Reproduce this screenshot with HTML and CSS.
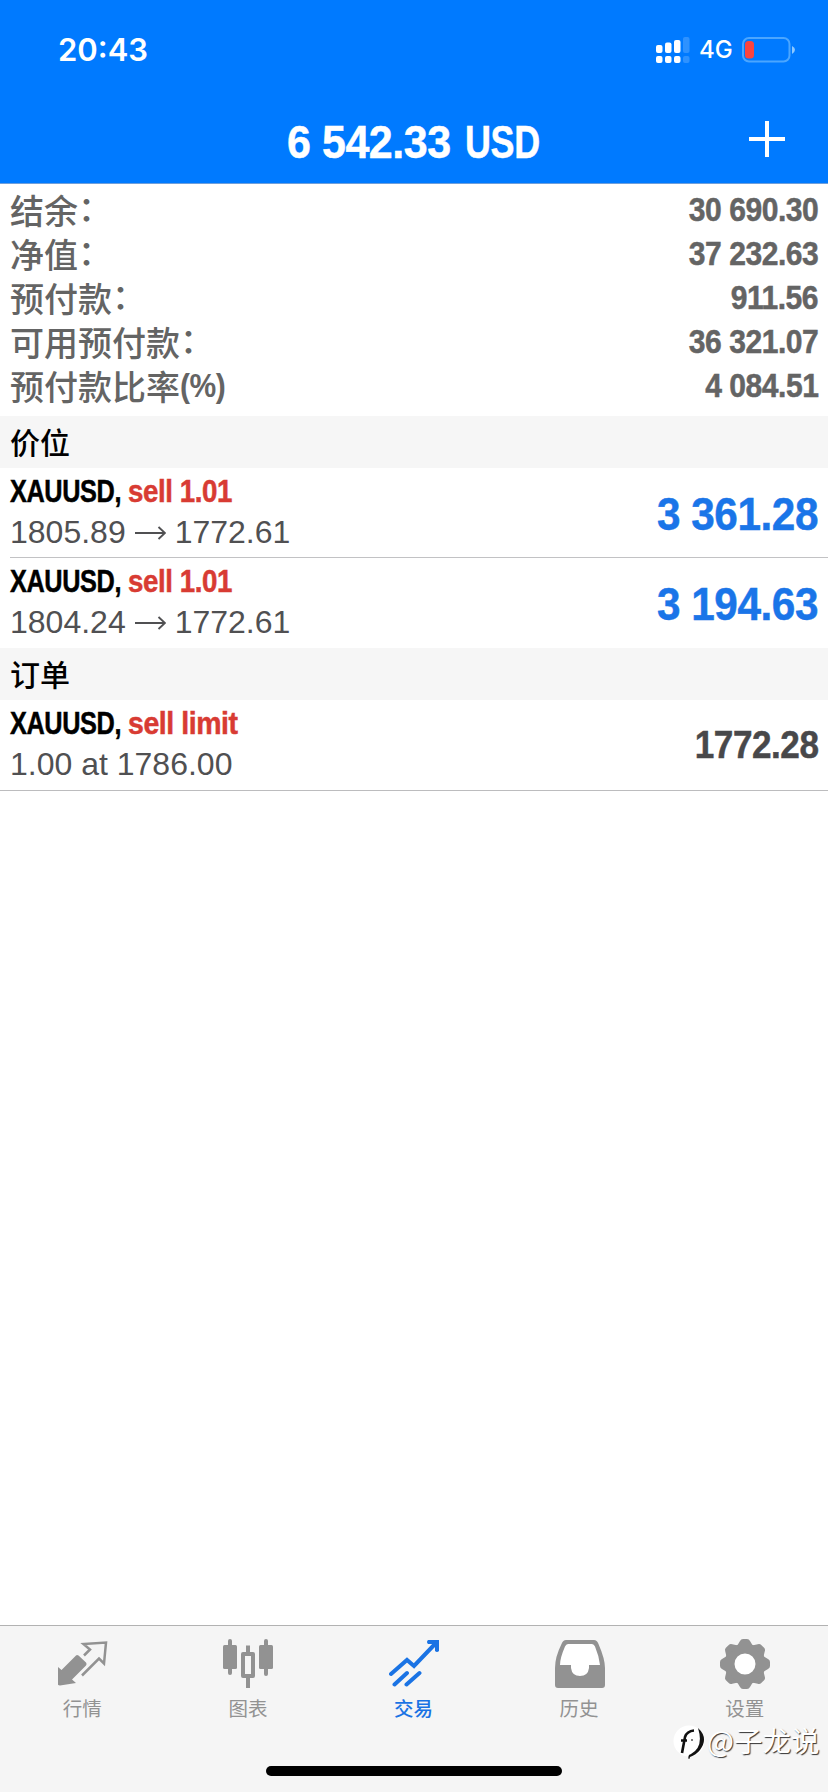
FILE: index.html
```html
<!DOCTYPE html>
<html lang="zh-CN">
<head>
<meta charset="utf-8">
<title>交易</title>
<link rel="stylesheet" href="styles.css">
</head>
<body>
<div class="screen">
  <header class="header">
    <div class="status">
      <span class="time">20:43</span>
      <div class="status-right">
        <svg class="signal" width="34" height="26" viewBox="0 0 34 26">
          <g fill="#fff"><rect x="0" y="8" width="6.500" height="8" rx="2"/><rect x="9" y="5.500" width="6.500" height="10.500" rx="2"/><rect x="18" y="3" width="6.500" height="13" rx="2"/><rect x="0" y="19" width="6.500" height="7" rx="2"/><rect x="9" y="19" width="6.500" height="7" rx="2"/><rect x="18" y="19" width="6.500" height="7" rx="2"/></g>
          <g fill="#fff" opacity=".18"><rect x="27" y="0" width="6.500" height="16" rx="2"/><rect x="27" y="19" width="6.500" height="7" rx="2"/></g>
        </svg>
        <span class="net">4G</span>
        <svg class="battery" width="54" height="26" viewBox="0 0 54 26">
          <rect x="1" y="1" width="46.500" height="23.500" rx="6" fill="none" stroke="#4ba6ff" stroke-width="2"/>
          <path d="M50 9Q53 10.500 53 12.700T50 17Z" fill="#8cc8ff"/>
          <rect x="3" y="4" width="9" height="17.500" rx="3.500" fill="#fb433f"/>
        </svg>
      </div>
    </div>
    <div class="nav">
      <h1 class="title"><span class="cond amount">6 542.33</span><span class="cond currency">USD</span></h1>
      <svg class="plus" width="36" height="36" viewBox="0 0 36 36"><path d="M18 0V36M0 18H36" stroke="#fff" stroke-width="4"/></svg>
    </div>
  </header>

  <section class="summary">
    <div class="line"><div class="label"><span>结余</span><span class="colon">：</span></div><b class="cond">30 690.30</b></div>
    <div class="line"><div class="label"><span>净值</span><span class="colon">：</span></div><b class="cond">37 232.63</b></div>
    <div class="line"><div class="label"><span>预付款</span><span class="colon">：</span></div><b class="cond">911.56</b></div>
    <div class="line"><div class="label"><span>可用预付款</span><span class="colon">：</span></div><b class="cond">36 321.07</b></div>
    <div class="line"><div class="label"><span>预付款比率</span><b class="cond pct">(%)</b></div><b class="cond">4 084.51</b></div>
  </section>

  <h2 class="group">价位</h2>
  <div class="row inset">
    <div class="info">
      <div class="deal"><span class="cond symbol">XAUUSD,</span><span class="cond side">sell 1.01</span></div>
      <div class="prices"><span>1805.89</span><svg class="arrow" width="31" height="16" viewBox="0 0 31 16"><path d="M0 8H30M23.500 2L30 8L23.500 14" fill="none" stroke="#505052" stroke-width="1.900"/></svg><span>1772.61</span></div>
    </div>
    <span class="cond profit">3 361.28</span>
  </div>
  <div class="row">
    <div class="info">
      <div class="deal"><span class="cond symbol">XAUUSD,</span><span class="cond side">sell 1.01</span></div>
      <div class="prices"><span>1804.24</span><svg class="arrow" width="31" height="16" viewBox="0 0 31 16"><path d="M0 8H30M23.500 2L30 8L23.500 14" fill="none" stroke="#505052" stroke-width="1.900"/></svg><span>1772.61</span></div>
    </div>
    <span class="cond profit">3 194.63</span>
  </div>

  <h2 class="group">订单</h2>
  <div class="row last">
    <div class="info">
      <div class="deal"><span class="cond symbol">XAUUSD,</span><span class="cond side limit">sell limit</span></div>
      <div class="prices"><span>1.00 at 1786.00</span></div>
    </div>
    <span class="cond quote">1772.28</span>
  </div>

  <main class="blank"></main>

  <footer class="bottom">
    <nav class="tabs">
      <a class="tab">
        <svg width="50" height="50" viewBox="0 0 50 50"><path d="M24 36.500L41 19.500L46 24.500L48 3.500L25.500 5L32 10.500L26 16.500" fill="none" stroke="#929292" stroke-width="2.500"/><path d="M0 28L3.500 31L18 16.500Q19 15.500 20.500 16.500L28 23.500Q29 25 28 26.500L14 40.500L18 44L2 46.500Q-.5 46.500-.5 44Z" fill="#929292"/></svg>
        <span>行情</span>
      </a>
      <a class="tab">
        <svg width="50" height="50" viewBox="0 0 50 50"><g fill="#929292"><rect x="5" y="0" width="4" height="36" rx="2"/><rect x="0" y="6" width="14" height="24" rx="1.500"/><rect x="41" y="0" width="4" height="37" rx="2"/><rect x="36" y="6" width="14" height="24" rx="1.500"/><path d="M23 6.500H27V14H23ZM23 38H27V49H23Z"/></g><rect x="20" y="15" width="10" height="22" fill="none" stroke="#929292" stroke-width="4" stroke-linejoin="round"/></svg>
        <span>图表</span>
      </a>
      <a class="tab active">
        <svg width="50" height="50" viewBox="0 0 50 50"><path d="M2 35L18 21L25 27L46 5M5.500 45.500L18 34M17.500 45.500L30.500 34" fill="none" stroke="#1a73e4" stroke-width="4" stroke-linecap="round"/><path d="M39 1H50V12Q48 14 46 12V7L43 5H39Q37 3 39 1Z" fill="#1a73e4"/></svg>
        <span>交易</span>
      </a>
      <a class="tab">
        <svg width="50" height="50" viewBox="0 0 50 50"><path fill="#fff" d="M11 3H39L47 20V30H34Q33 37 25 37T16 30H3V20Z"/><path fill="#929292" fill-rule="evenodd" d="M11 1H39Q42 1 43.500 5Q50 20 50 29V46Q50 49 47 49H3Q0 49 0 46V29Q0 18 6.500 5Q8 1 11 1ZM13 5Q11 5 10 7.500Q5 19 5 26H16V29Q17 37 25 37T34 29V26H45Q44 17 40 7.500Q39 5 37 5Z"/></svg>
        <span>历史</span>
      </a>
      <a class="tab">
        <svg width="50" height="50" viewBox="-25 -25 50 50"><circle r="11" fill="#fff"/><g fill="#929292"><circle r="15.500" fill="none" stroke="#929292" stroke-width="10"/><path id="tooth" d="M-8-18L-5-23Q-4-25-2-25H2Q4-25 5-23L8-18Z"/><use href="#tooth" transform="rotate(45)"/><use href="#tooth" transform="rotate(90)"/><use href="#tooth" transform="rotate(135)"/><use href="#tooth" transform="rotate(180)"/><use href="#tooth" transform="rotate(225)"/><use href="#tooth" transform="rotate(270)"/><use href="#tooth" transform="rotate(315)"/></g></svg>
        <span>设置</span>
      </a>
    </nav>
    <div class="home"></div>
    <div class="watermark">
      <svg width="34" height="34" viewBox="0 0 34 34"><circle cx="16" cy="16" r="15.500" fill="#fff"/><path d="M9 28L12 12Q14 6 21 5.500M8 15.500H14" fill="none" stroke="#111" stroke-width="2.600"/><path d="M25 3Q36 13 27 25Q23 30 17 32L16 35Q14 30 18 29Q31 22 25 3Z" fill="#111"/><circle cx="19" cy="15" r="1" fill="#555"/></svg>
      <span>@子龙说</span>
    </div>
  </footer>
</div>
</body>
</html>
```
FILE: styles.css
```css
* { box-sizing: border-box; }
body { margin: 0; background: #fff; font-family: "Liberation Sans", "Noto Sans CJK SC", sans-serif; }
.screen { width: 828px; height: 1792px; display: flex; flex-direction: column; overflow: hidden; }
.cond { display: inline-block; font-family: "Liberation Sans", sans-serif; font-weight: 700; letter-spacing: -.5px; white-space: nowrap; transform-origin: right center; -webkit-text-stroke: .5px currentColor; }

.header { height: 184px; flex: none; background: #007aff; color: #fff; border-bottom: 1px solid #6f9fdb; }
.status { height: 100px; display: flex; justify-content: space-between; padding: 0 32px 0 58px; }
.time { font: 600 31px/100px Inter, sans-serif; letter-spacing: 0; }
.status-right { display: flex; align-items: center; }
.net { font: 500 24px/102px Inter, sans-serif; margin-left: 9px; width: 43px; }
.nav { height: 83px; display: grid; grid-template-columns: 1fr 248px 1fr; align-items: center; }
.title { grid-column: 2; display: flex; margin: 0 0 0 -3px; font-size: 47px; line-height: 82px; }
.title .cond { transform-origin: left center; }
.amount { flex: 0 0 173px; transform: scaleX(.915); }
.currency { flex: 0 0 75px; margin-left: -1px; transform: scaleX(.765); }
.plus { justify-self: end; margin: -6px 43px 0 0; }

.summary { height: 232px; flex: none; padding: 4px 10px 8px; color: #646464; }
.line { height: 44px; display: flex; justify-content: space-between; font: 500 34px/43px "Noto Sans CJK SC", sans-serif; }
.line .cond { font-size: 33px; line-height: 44px; transform: scaleX(.91); }
.label { display: flex; }
.line .pct { transform-origin: left center; line-height: 43px; -webkit-text-stroke: 0; }
.colon { width: 34px; line-height: 37px; }

.group { height: 52px; flex: none; margin: 0; padding-left: 10px; background: #f6f6f6; color: #000; font: 500 30px/50px "Noto Sans CJK SC", sans-serif; }
.row { height: 90px; flex: none; display: flex; justify-content: space-between; align-items: center; padding: 0 10px; position: relative; }
.inset::after { content: ""; position: absolute; left: 10px; right: 0; bottom: 0; height: 1px; background: #c2c2c4; }
.last { border-bottom: 1px solid #bcbcbe; height: 91px; }
.info { align-self: flex-start; padding-top: 4px; }
.deal { display: flex; font-size: 32px; line-height: 38px; }
.deal .cond { transform-origin: left center; }
.symbol { width: 118px; transform: scaleX(.79); color: #000; }
.side { transform: scaleX(.865); color: #d83b33; }
.limit { transform: scaleX(.89); }
.prices { display: flex; align-items: center; font-size: 32px; line-height: 45px; color: #505052; }
.arrow { margin: 0 9px; }
.profit { font-size: 47px; transform: scaleX(.9); color: #1a75e8; }
.quote { font-size: 39px; transform: scaleX(.9); color: #48484a; }

.blank { flex: 1; }
.bottom { height: 167px; flex: none; position: relative; border-top: 1px solid #b2b2b2; background: #f5f5f5; }
.tabs { display: grid; grid-template-columns: repeat(5, 1fr); padding-top: 13px; }
.tab { display: flex; flex-direction: column; align-items: center; color: #929292; font: 400 19.5px/28px "Noto Sans CJK SC", sans-serif; }
.tab span { margin: 5px 1px 1px 0; }
.active { color: #1a73e4; font-weight: 500; }
.home { width: 296px; height: 10px; margin: 43px auto 0; border-radius: 5px; background: #000; }
.watermark { position: absolute; left: 673px; top: 95px; display: flex; align-items: center; color: #fff; font: 400 28.5px/38px "Noto Sans CJK SC", sans-serif; text-shadow: 1px 1px 1px #333; white-space: nowrap; }
.watermark svg { margin-top: 4px; }
```
